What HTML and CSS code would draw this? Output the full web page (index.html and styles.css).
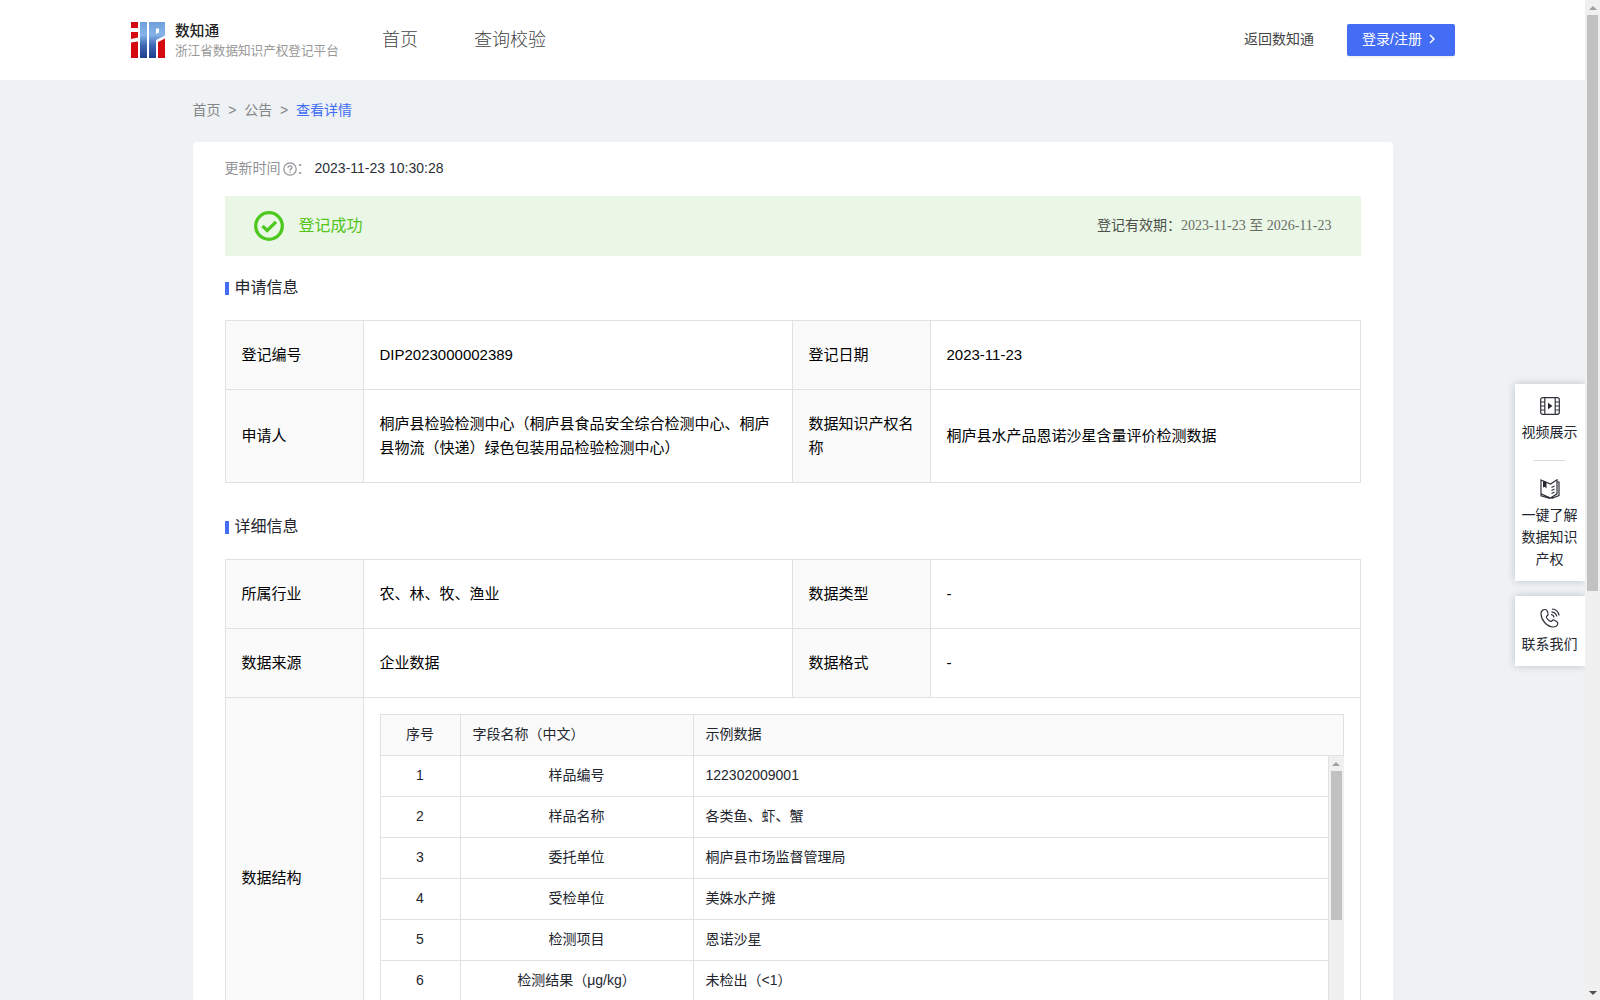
FILE: index.html
```html
<!DOCTYPE html>
<html lang="zh-CN">
<head>
<meta charset="utf-8">
<title>数知通 - 查看详情</title>
<link rel="stylesheet" href="styles.css">
</head>
<body>
<div class="page">
  <header class="header">
    <svg class="logo" viewBox="0 0 34 36">
      <defs><linearGradient id="blue" x1="0" y1="0" x2="0" y2="36" gradientUnits="userSpaceOnUse"><stop offset="0" stop-color="#6f9fdc"/><stop offset=".35" stop-color="#86b4e8"/><stop offset=".65" stop-color="#3d67b4"/><stop offset="1" stop-color="#203f8c"/></linearGradient></defs>
      <path fill="#d40a10" d="M0 0h7v6H0zM0 10h7v5.500L0 17zM0 20.500l7-1V36H0zM27 20l7-3.500V36h-7z"/>
      <path fill="url(#blue)" d="M9 0h7v36H9zM18 0h16v13.500l-9 4.500V36h-7zM25 6.500V12l3-1.500v-4z" fill-rule="evenodd"/>
    </svg>
    <div class="brand"><div class="brand-name">数知通</div><div class="brand-sub">浙江省数据知识产权登记平台</div></div>
    <nav class="nav"><a>首页</a><a>查询校验</a></nav>
    <a class="back">返回数知通</a>
    <button class="login">登录/注册<svg viewBox="0 0 6 10"><path d="M1 1l4 4-4 4"/></svg></button>
  </header>

  <main class="main">
    <div class="crumbs"><span>首页</span><span>&gt;</span><span>公告</span><span>&gt;</span><span class="current">查看详情</span></div>
    <section class="card">
      <div class="updated"><span>更新时间</span><svg viewBox="0 0 14 14"><circle cx="7" cy="7" r="6.200"/><path d="M5 5.700C5 3.200 9 3.300 9 5.500 9 7 7 6.900 7 8.400M7 9.500v1.200"/></svg><span>：</span><span class="time">2023-11-23 10:30:28</span></div>
      <div class="status">
        <svg viewBox="0 0 30 30"><circle cx="15" cy="15" r="13.300"/><path d="M8.500 15l4.700 4.500 8.800-8.700"/></svg>
        <span class="status-text">登记成功</span>
        <span class="valid">登记有效期：<span class="range">2023-11-23 至 2026-11-23</span></span>
      </div>

      <h2 class="title">申请信息</h2>
      <div class="grid apply">
        <div class="label">登记编号</div><div>DIP2023000002389</div>
        <div class="label">登记日期</div><div>2023-11-23</div>
        <div class="label">申请人</div><div>桐庐县检验检测中心（桐庐县食品安全综合检测中心、桐庐县物流（快递）绿色包装用品检验检测中心）</div>
        <div class="label">数据知识产权名称</div><div>桐庐县水产品恩诺沙星含量评价检测数据</div>
      </div>

      <h2 class="title second">详细信息</h2>
      <div class="grid detail">
        <div class="label">所属行业</div><div>农、林、牧、渔业</div>
        <div class="label">数据类型</div><div>-</div>
        <div class="label">数据来源</div><div>企业数据</div>
        <div class="label">数据格式</div><div>-</div>
        <div class="label">数据结构</div>
        <div class="wide">
          <div class="fields">
            <div class="row head"><div>序号</div><div>字段名称（中文）</div><div>示例数据</div></div>
            <div class="scroll">
              <div class="rows">
                <div class="row"><div>1</div><div>样品编号</div><div>122302009001</div></div>
                <div class="row"><div>2</div><div>样品名称</div><div>各类鱼、虾、蟹</div></div>
                <div class="row"><div>3</div><div>委托单位</div><div>桐庐县市场监督管理局</div></div>
                <div class="row"><div>4</div><div>受检单位</div><div>美姝水产摊</div></div>
                <div class="row"><div>5</div><div>检测项目</div><div>恩诺沙星</div></div>
                <div class="row"><div>6</div><div>检测结果（μg/kg）</div><div>未检出（&lt;1）</div></div>
              </div>
              <div class="bar inner"><i class="up"></i><i class="thumb"></i></div>
            </div>
          </div>
        </div>
      </div>
    </section>
  </main>
</div>
<div class="bar outer"><i class="up"></i><i class="thumb"></i><i class="down"></i></div>

<aside class="side">
  <div class="panel">
    <svg viewBox="0 0 20 18"><rect x=".7" y=".7" width="18.600" height="16.600" rx="2"/><path d="M4.800 1v16M15.200 1v16M1 5h4M1 9h4M1 13h4M15 5h4M15 9h4M15 13h4"/><path class="solid" d="M8 5.800v6.400L12.500 9z"/></svg>
    <span>视频展示</span>
    <hr>
    <svg class="book" viewBox="0 0 20 20"><path d="M1 1l9.500 4L17 .8v14L10.500 19 1 14.800zM17 3h2v13.500L11.500 19.500M1 14.800v2L10 19.500M11.500 8.500l3-1.500M11.500 11.500l3-1.500M11.500 14.500l3-1.500"/><path class="solid" d="M3 1.800l3.500 1.400v6.300L4.800 7.800 3 8.500z"/></svg>
    <span>一键了解<br>数据知识<br>产权</span>
  </div>
  <div class="panel contact">
    <svg viewBox="0 0 20 20"><path d="M5.200 1.500C2.500 1.500 1 3.500 1 6c.3 6.500 6 12.500 12 13 2.500 0 4.500-1.300 4.800-3.500.1-1-.4-1.500-1.200-2l-2.300-1.300c-1-.5-1.700-.2-2.300.6-.7.900-1.500.8-2.400.1A12 12 0 0 1 6.700 10c-.5-.8-.5-1.500.3-2 1.200-.7 1.400-1.500 1-2.600L7.200 3C6.900 2 6.200 1.500 5.200 1.500zM11 6.500c1.500.2 2.700 1.200 3 3M11.500 3.800c2.700.3 4.700 2 5.200 4.700M12 1c3.700.2 6.500 2.700 7 6.500"/></svg>
    <span>联系我们</span>
  </div>
</aside>
</body>
</html>
```
FILE: styles.css
```css
* { box-sizing: border-box; }
body {
  margin: 0;
  height: 1000px;
  overflow: hidden;
  display: flex;
  background: #eef2f5;
  color: #23262f;
  font: 14px/22px "Liberation Sans", "Noto Sans CJK SC", sans-serif;
}
svg { display: block; fill: none; flex: none; }
.page { flex: 1; min-width: 0; height: 1000px; overflow: hidden; }

.header {
  display: flex;
  align-items: center;
  height: 80px;
  padding: 0 130px 0 131px;
  background: #fff;
}
.logo { width: 34px; height: 36px; }
.brand { width: 164px; margin-left: 10px; padding-top: 1px; white-space: nowrap; }
.brand-name { font-size: 14.700px; line-height: 20px; font-weight: 500; color: #222; }
.brand-sub { font-size: 12.600px; line-height: 20px; color: #999; }
.nav { display: flex; gap: 56px; margin-left: 43px; font-size: 18px; color: #444; font-weight: 300; }
.back { margin: 0 0 2px auto; color: #444; }
.login {
  display: flex;
  align-items: center;
  gap: 7px;
  width: 108px;
  height: 32px;
  margin-left: 33px;
  padding: 0 0 2px 15px;
  border: 0;
  border-radius: 2px;
  background: #446df6;
  box-shadow: 0 2px 0 rgba(0, 0, 0, .045);
  color: #fff;
  font: inherit;
}
.login svg { width: 6px; height: 10px; stroke: #fff; stroke-width: 1.500; }

.main { width: 1200px; margin: 0 auto; }
.crumbs { display: flex; gap: 7.800px; height: 62px; padding-top: 19px; color: #858585; }
.crumbs .current { color: #3e6cf4; }

.card { height: 940px; padding: 15px 32px; border-radius: 4px; background: #fff; }
.updated { display: flex; align-items: center; height: 22px; color: #909196; }
.updated svg { width: 14px; height: 14px; margin: 2px 0 0 2px; stroke: #909196; stroke-width: 1.200; }
.updated .time { margin-left: 4px; color: #2d2f38; }
.status {
  display: flex;
  align-items: center;
  height: 60px;
  margin-top: 17px;
  padding: 0 29px;
  background: #ebf7e6;
}
.status svg { width: 30px; height: 30px; stroke: #4dc81e; stroke-width: 3.300; }
.status-text { margin-left: 15px; font-size: 16px; color: #52c41a; }
.valid { margin: 0 0 2px auto; color: #4c4f4a; }
.range { font-family: "Liberation Serif", "Noto Sans CJK SC", serif; color: #686d66; }

.title {
  display: flex;
  align-items: center;
  height: 24px;
  margin: 20px 0;
  font-size: 16px;
  line-height: 24px;
  font-weight: 400;
}
.title::before { content: ""; width: 4px; height: 13px; margin: 1px 6px 0 0; background: #446df6; }
.title.second { margin: 32px 0 20px; }

.grid {
  display: grid;
  grid-template-columns: 138px 429px 138px 430px;
  border: solid #e1e1e1;
  border-width: 1px 0 0 1px;
  font-size: 15px;
  line-height: 24px;
  color: #000;
}
.grid > div {
  display: flex;
  align-items: center;
  padding: 0 16px 1px;
  border: solid #e1e1e1;
  border-width: 0 1px 1px 0;
}
.grid > .label { background: #fafafa; }
.apply { grid-template-rows: 69px 93px; }
.detail { grid-template-rows: 69px 69px 362px; }
.grid > .wide { grid-column: 2 / 5; padding: 16px; align-items: flex-start; }

.fields {
  width: 964px;
  border: solid #e1e1e1;
  border-width: 1px 0 0 1px;
  font-size: 14px;
  line-height: 22px;
  color: #23262f;
}
.row { display: grid; grid-template-columns: 80px 233px 1fr; height: 41px; }
.row > div {
  display: flex;
  align-items: center;
  justify-content: center;
  padding: 0 12px 2px;
  border: solid #e1e1e1;
  border-width: 0 1px 1px 0;
}
.row > div:last-child, .head > div:nth-child(2) { justify-content: flex-start; }
.head { background: #fafafa; }
.scroll { display: flex; height: 288px; overflow: hidden; }
.rows { flex: 1; }

.bar { display: flex; flex-direction: column; align-items: center; width: 15px; background: #f0f0f0; }
.up, .down { border: 4px solid transparent; border-width: 0 4px 4px; border-bottom-color: #a0a0a0; }
.up { margin: 6px 0 5px; }
.down { margin: auto 0 5px; border-width: 4px 4px 0; border-top-color: #505050; }
.thumb { width: 11px; background: #c1c1c1; }
.outer .thumb { height: 576px; }
.inner .thumb { height: 149px; }

.side { position: absolute; top: 384px; left: 1515px; width: 70px; clip-path: inset(-12px 0 -12px -12px); }
.panel {
  display: flex;
  flex-direction: column;
  align-items: center;
  height: 197px;
  padding-top: 13px;
  background: #fff;
  box-shadow: 0 0 8px rgba(0, 0, 0, .2);
  text-align: center;
}
.panel svg { width: 20px; height: 18px; stroke: #30323a; stroke-width: 1.200; }
.panel .solid { fill: #23262f; stroke: none; }
.panel span { margin: 6px 1px 0 0; }
.panel hr { width: 32px; height: 1px; margin: 17px 0 18px; border: 0; background: #dcdcdc; }
.panel .book { height: 20px; }
.panel .book + span { margin-top: 5px; }
.contact { height: 70px; margin-top: 15px; padding-top: 12px; }
.contact svg { height: 20px; }
.contact span { margin-top: 5px; }
```
